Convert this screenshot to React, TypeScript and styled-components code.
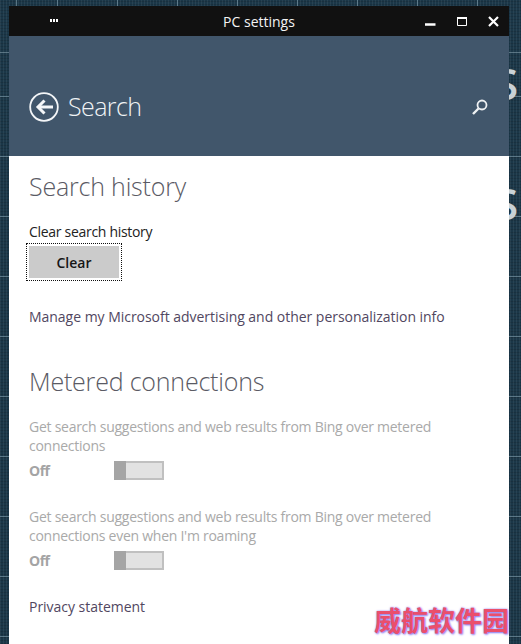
import styled, { createGlobalStyle } from "styled-components"

const Global = createGlobalStyle`
  html, body { margin: 0; padding: 0; }
  body { font-family: "Open Sans", "Liberation Sans", sans-serif; }
`

const Desktop = styled.div`
  position: relative;
  width: 521px;
  height: 644px;
  box-sizing: border-box;
  padding: 6px 12px 0 9px;
  overflow: hidden;
  background-color: #1b3748;
  background-image:
    repeating-linear-gradient(0deg, rgba(140,170,185,.55) 0 1px, transparent 1px 60px),
    repeating-linear-gradient(90deg, rgba(140,170,185,.55) 0 1px, transparent 1px 60px),
    repeating-linear-gradient(90deg, rgba(255,255,255,.06) 0 1px, transparent 1px 3px),
    repeating-linear-gradient(0deg, rgba(0,0,0,.12) 0 1px, transparent 1px 3px);
  background-position: 0 53px, 57px 0, 0 0, 0 0;
`

const DesktopLetter = styled.span<{ $top: number }>`
  position: absolute;
  left: 494px;
  top: ${p => p.$top}px;
  font-size: 44px;
  line-height: 50px;
  font-weight: 600;
  color: #c9d2d6;
`

const Window = styled.div`
  position: relative;
  display: flex;
  flex-direction: column;
  height: 638px;
`

const TitleBar = styled.div`
  display: grid;
  grid-template-columns: 1fr auto 1fr;
  align-items: center;
  height: 30px;
  padding: 0 10px 0 41px;
  background: #111;
  color: #f4f4f4;
  font-size: 14px;
`

const WindowTitle = styled.div`
  margin-left: -31px;
`

const Dots = styled.div`
  display: flex;
  gap: 1px;
  margin-bottom: 1px;
`

const Dot = styled.i`
  width: 2px;
  height: 3px;
  background: #fff;
`

const Controls = styled.div`
  display: flex;
  justify-content: flex-end;
  align-items: center;
  gap: 21px;
`

const Header = styled.header`
  display: flex;
  align-items: center;
  justify-content: space-between;
  height: 120px;
  box-sizing: border-box;
  padding: 21px 21px 0 20px;
  background: #41566b;
  color: #f0f3f5;
`

const HeaderLeft = styled.div`
  display: flex;
  align-items: center;
  gap: 9px;
`

const PageTitle = styled.h1`
  margin: 0 0 2px;
  font-size: 25px;
  line-height: 34px;
  font-weight: 300;
  letter-spacing: -0.6px;
`

const Content = styled.main`
  flex: 1;
  display: flex;
  flex-direction: column;
  align-items: flex-start;
  padding: 13px 20px 0;
  background: #fff;
`

const SectionTitle = styled.h2<{ $top?: number }>`
  margin: ${p => p.$top ?? 0}px 0 0;
  font-size: 25px;
  line-height: 34px;
  font-weight: 300;
  letter-spacing: -0.2px;
  color: #5a5a64;
`

const Label = styled.div<{ $top?: number }>`
  margin-top: ${p => p.$top ?? 0}px;
  font-size: 14px;
  line-height: 19px;
  letter-spacing: -0.3px;
  color: #222;
`

const ClearFocus = styled.div`
  margin-top: 2px;
  margin-left: -3px;
  border: 1px dotted #111;
  padding: 2px;
  display: flex;
`

const ClearButton = styled.button`
  width: 90px;
  height: 32px;
  padding: 0;
  border: 0;
  background: #cbcbcb;
  color: #161616;
  font: 600 14px "Open Sans", sans-serif;
`

const Link = styled.a<{ $top: number }>`
  margin-top: ${p => p.$top}px;
  font-size: 14px;
  line-height: 20px;
  letter-spacing: -0.03px;
  color: #51475f;
`

const Disabled = styled.div<{ $top: number }>`
  margin-top: ${p => p.$top}px;
  width: 440px;
  font-size: 14px;
  line-height: 19px;
  letter-spacing: -0.26px;
  color: #a9a9a9;
`

const ToggleRow = styled.div`
  display: flex;
  align-items: center;
  height: 19px;
  margin-top: 6px;
`

const OffLabel = styled.span`
  width: 85px;
  font-size: 14px;
  font-weight: 700;
  letter-spacing: -0.5px;
  color: #a4a4a4;
`

const Toggle = styled.div`
  display: flex;
  justify-content: flex-start;
  width: 50px;
  height: 19px;
  box-sizing: border-box;
  border: 2px solid #c0c0c0;
  border-left: 0;
  background: #e2e2e2;
`

const Thumb = styled.div`
  width: 12px;
  margin-top: -2px;
  margin-bottom: -2px;
  background: #a5a5a5;
`

const Watermark = styled.div`
  position: absolute;
  left: 374px;
  top: 602px;
  font-family: "Noto Sans CJK SC", sans-serif;
  font-size: 27px;
  line-height: 36px;
  font-weight: 700;
  white-space: nowrap;
  color: #ea4f6c;
  text-shadow: 0 0 2px #8f7ff0, 1px 1px 2px #8f7ff0;
`

const BackIcon = () => (
  <svg width="30" height="30" viewBox="0 0 30 30" fill="none" stroke="#f4f6f8">
    <circle cx="15" cy="15" r="13.8" strokeWidth="1.8" />
    <path d="M24 15H10" strokeWidth="3" />
    <path d="M15.5 8.5L9 15l6.500 6.500" strokeWidth="3" />
  </svg>
)

const SearchIcon = () => (
  <svg width="16" height="16" viewBox="0 0 16 16" fill="none" stroke="#eef1f3">
    <circle cx="10" cy="6" r="4.500" strokeWidth="1.800" />
    <path d="M6.500 9.500L1 15" strokeWidth="2.400" />
  </svg>
)

const WindowIcons = () => (
  <Controls>
    <svg width="11" height="10" viewBox="0 0 11 10"><path d="M0 8.500h10.500" stroke="#fff" strokeWidth="2.500" /></svg>
    <svg width="10" height="9" viewBox="0 0 10 9" fill="none"><path d="M.5 1.500h9v7h-9z" stroke="#fff" /><path d="M0 1h10" stroke="#fff" strokeWidth="2" /></svg>
    <svg width="11" height="11" viewBox="0 0 11 11" fill="none"><path d="M1 1l9 9M10 1l-9 9" stroke="#fff" strokeWidth="2.200" /></svg>
  </Controls>
)

const MeteredOption = ({ text, top }: { text: string; top: number }) => (
  <>
    <Disabled $top={top}>{text}</Disabled>
    <ToggleRow>
      <OffLabel>Off</OffLabel>
      <Toggle><Thumb /></Toggle>
    </ToggleRow>
  </>
)

const App = () => (
  <Desktop>
    <Global />
    <DesktopLetter $top={58}>S</DesktopLetter>
    <DesktopLetter $top={178}>S</DesktopLetter>
    <Window>
      <TitleBar>
        <Dots><Dot /><Dot /><Dot /></Dots>
        <WindowTitle>PC settings</WindowTitle>
        <WindowIcons />
      </TitleBar>
      <Header>
        <HeaderLeft>
          <BackIcon />
          <PageTitle>Search</PageTitle>
        </HeaderLeft>
        <SearchIcon />
      </Header>
      <Content>
        <SectionTitle>Search history</SectionTitle>
        <Label $top={19}>Clear search history</Label>
        <ClearFocus><ClearButton>Clear</ClearButton></ClearFocus>
        <Link $top={26}>Manage my Microsoft advertising and other personalization info</Link>
        <SectionTitle $top={37}>Metered connections</SectionTitle>
        <MeteredOption top={19} text="Get search suggestions and web results from Bing over metered connections" />
        <MeteredOption top={27} text="Get search suggestions and web results from Bing over metered connections even when I'm roaming" />
        <Link $top={27}>Privacy statement</Link>
      </Content>
    </Window>
    <Watermark>威航软件园</Watermark>
  </Desktop>
)

export default App
